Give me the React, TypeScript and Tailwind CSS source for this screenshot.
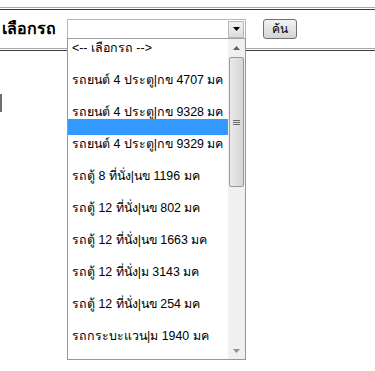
const options = [
  "<-- เลือกรถ -->",
  "",
  "รถยนต์ 4 ประตู|กข 4707 มค",
  "",
  "รถยนต์ 4 ประตู|กข 9328 มค",
  "",
  "รถยนต์ 4 ประตู|กข 9329 มค",
  "",
  "รถตู้ 8 ที่นั่ง|นข 1196 มค",
  "",
  "รถตู้ 12 ที่นั่ง|นข 802 มค",
  "",
  "รถตู้ 12 ที่นั่ง|นข 1663 มค",
  "",
  "รถตู้ 12 ที่นั่ง|ม 3143 มค",
  "",
  "รถตู้ 12 ที่นั่ง|นข 254 มค",
  "",
  "รถกระบะแวน|ม 1940 มค",
  "",
];

const DoubleLine = () => (
  <div className="h-[3px] border-t border-b border-t-[#a8a8a8] border-b-[#3c3c3c]" />
);

export default function App() {
  return (
    <div
      className="relative w-[375px] h-[371px] bg-white overflow-hidden text-black"
      style={{ fontFamily: "Tahoma, 'Liberation Sans', 'Noto Sans', sans-serif" }}
    >
      <div className="pt-[7px]">
        <DoubleLine />
        {/* search row */}
        <div className="flex items-center h-[38px]">
          <span className="pl-[2px] w-[67px] text-[16px] font-bold leading-none">เลือกรถ</span>
          <div className="flex items-center w-[179px] h-[21px] border border-[#e3b25c] bg-white">
            <div className="flex-1" />
            <div className="w-[16px] h-[17px] mr-[1px] flex items-center justify-center bg-gradient-to-b from-[#f4f4f4] to-[#dcdcdc] border border-[#b8b8b8]">
              <svg width="7" height="4" viewBox="0 0 7 4">
                <path d="M0 0H7L3.5 4Z" fill="#000" />
              </svg>
            </div>
          </div>
          <button className="ml-[17px] w-[34px] h-[20px] rounded-[3px] border border-[#707070] bg-gradient-to-b from-[#f2f2f2] to-[#d4d4d4] text-[12px] leading-none">
            ค้น
          </button>
        </div>
        <DoubleLine />
      </div>

      {/* stray left marker */}
      <div className="absolute left-0 top-[94px] w-[2px] h-[18px] bg-[#6e6e6e]" />

      {/* open dropdown list */}
      <div className="absolute left-[67px] top-[38px] w-[179px] h-[322px] border border-[#7f9db9] border-t-[#a0a0a0] bg-white flex">
        <div className="flex-1 flex flex-col overflow-hidden">
          {options.map((o, i) => (
            <div
              key={i}
              className={`h-[16px] shrink-0 pl-[4px] text-[12.4px] leading-[19px] whitespace-nowrap ${
                i === 5 ? "bg-[#3399ff] text-white" : ""
              }`}
            >
              {o}
            </div>
          ))}
        </div>
        {/* scrollbar */}
        <div className="w-[17px] bg-[#f0f0f0] flex flex-col items-center">
          <div className="h-[17px] w-full flex items-center justify-center">
            <svg width="7" height="4" viewBox="0 0 7 4">
              <path d="M0 4H7L3.5 0Z" fill="#606060" />
            </svg>
          </div>
          <div className="mt-[1px] w-[15px] h-[130px] rounded-[2px] border border-[#9a9a9a] bg-gradient-to-r from-[#eaeaea] to-[#d6d6d6] flex flex-col items-center justify-center gap-[1px]">
            <div className="w-[7px] h-[1px] bg-[#6a6a6a]" />
            <div className="w-[7px] h-[1px] bg-[#6a6a6a]" />
            <div className="w-[7px] h-[1px] bg-[#6a6a6a]" />
          </div>
          <div className="flex-1" />
          <div className="h-[17px] w-full flex items-center justify-center">
            <svg width="7" height="4" viewBox="0 0 7 4">
              <path d="M0 0H7L3.5 4Z" fill="#909090" />
            </svg>
          </div>
        </div>
      </div>
    </div>
  );
}
